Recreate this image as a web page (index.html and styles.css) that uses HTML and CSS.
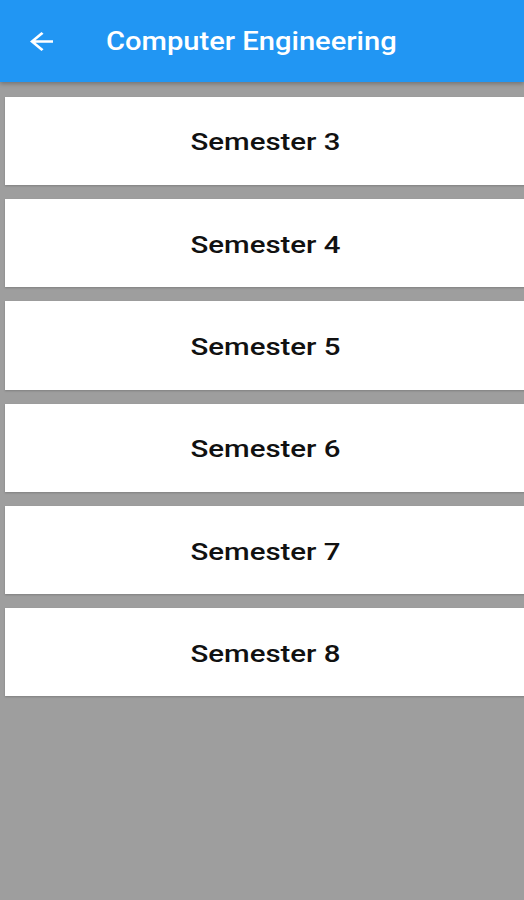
FILE: index.html
```html
<!DOCTYPE html>
<html>
<head>
<meta charset="utf-8">
<link rel="stylesheet" href="styles.css">
</head>
<body>
<header class="appbar">
  <svg class="back" width="23" height="19" viewBox="4 4 16 16" preserveAspectRatio="none"><path d="M20 11H7.83l5.59-5.59L12 4l-8 8 8 8 1.41-1.41L7.83 13H20v-2z" fill="#fff"/></svg>
  <h1 class="title">Computer Engineering</h1>
</header>
<main class="list">
  <div class="card"><span class="label">Semester 3</span></div>
  <div class="card"><span class="label">Semester 4</span></div>
  <div class="card"><span class="label">Semester 5</span></div>
  <div class="card"><span class="label">Semester 6</span></div>
  <div class="card"><span class="label">Semester 7</span></div>
  <div class="card"><span class="label">Semester 8</span></div>
</main>
</body>
</html>
```
FILE: styles.css
```css
html, body {
  margin: 0;
  padding: 0;
  background: #9e9e9e;
  height: 100%;
  overflow: hidden;
  font-family: Roboto, "Noto Sans", sans-serif;
}
.appbar {
  height: 82px;
  background: #2196f3;
  display: flex;
  align-items: center;
  padding-left: 30px;
  box-shadow: 0 2px 4px rgba(0,0,0,0.25);
}
.back {
  width: 23px;
  height: 19px;
  flex: none;
}
.title {
  margin: 0 0 0 53px;
  color: #fff;
  font-size: 26px;
  font-weight: 500;
  transform: scaleX(1.12);
  transform-origin: left center;
  white-space: nowrap;
}
.list {
  display: flex;
  flex-direction: column;
  gap: 14px;
  padding: 14.7px 0 0 4.5px;
}
.card {
  width: 522px;
  height: 88.3px;
  background: #fff;
  display: flex;
  align-items: center;
  justify-content: center;
  box-shadow: 0 1px 2px rgba(0,0,0,0.2);
  padding-top: 2px;
  box-sizing: border-box;
}
.label {
  font-size: 24.5px;
  font-weight: 500;
  color: #111;
  transform: scaleX(1.2);
  white-space: nowrap;
}
```
